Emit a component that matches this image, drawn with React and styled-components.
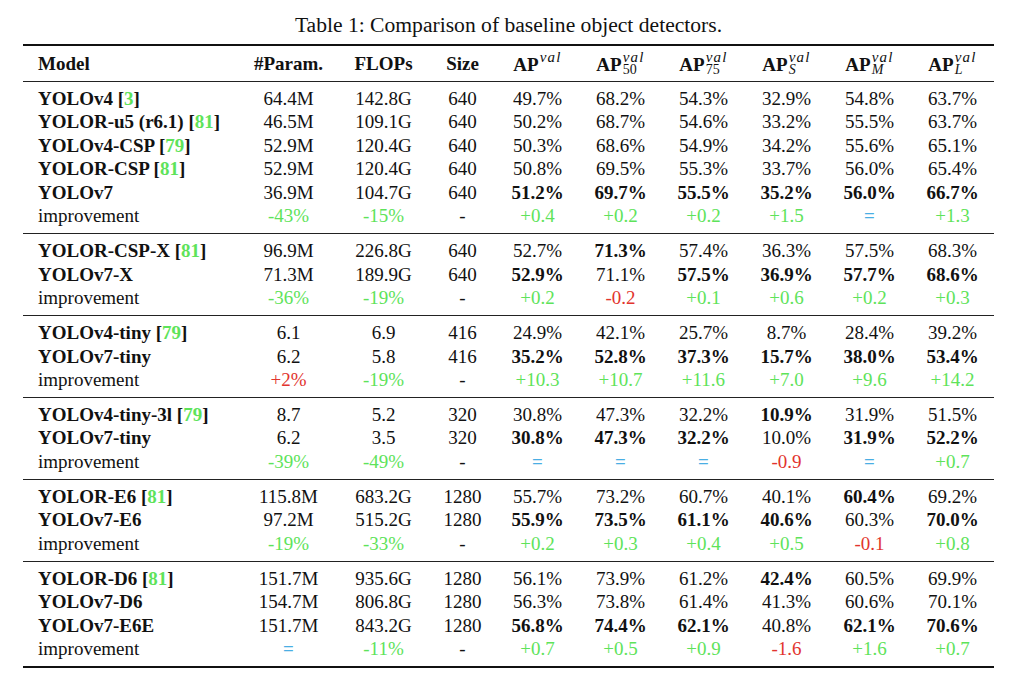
import React from "react";
import styled, { createGlobalStyle } from "styled-components";

const GlobalStyle = createGlobalStyle`
  body {
    margin: 0;
    background: #ffffff;
    font-family: "Liberation Serif", "Times New Roman", serif;
    color: #111111;
  }
`;

const Page = styled.div`
  width: 1024px;
  height: 692px;
  padding: 13px 0 0 23px;
  box-sizing: border-box;
`;

const Caption = styled.div`
  width: 971px;
  text-align: center;
  font-size: 21.6px;
  line-height: 24px;
  margin-bottom: 7px;
`;

const Table = styled.div`
  width: 971px;
  border-top: 2px solid #111;
  border-bottom: 2px solid #111;
`;

const COLS = "216px 99px 91px 67px repeat(6, 83px)";

const HeaderRow = styled.div`
  display: grid;
  grid-template-columns: ${COLS};
  height: 36px;
  padding-top: 1px;
  box-sizing: border-box;
  align-items: center;
  border-bottom: 1.5px solid #222;
  font-size: 19px;
`;

const Section = styled.div`
  padding: 5px 0 5.8px;
  border-top: ${(p) => (p.$first ? "none" : "1px solid #222")};
`;

const Row = styled.div`
  display: grid;
  grid-template-columns: ${COLS};
  height: 23.4px;
  align-items: center;
  font-size: 19px;
  line-height: 23.4px;
`;

const Cell = styled.div`
  text-align: ${(p) => (p.$left ? "left" : "center")};
  padding-left: ${(p) => (p.$left ? "15px" : "0")};
  font-weight: ${(p) => (p.$bold ? "bold" : "normal")};
  color: ${(p) => p.$color || "#111"};
  white-space: nowrap;
`;

const Ref = styled.span`
  color: #5ee35a;
`;

const Ap = styled.span`
  display: inline-flex;
  align-items: center;
  justify-content: center;
  line-height: 19px;
`;

const Scripts = styled.span`
  display: inline-flex;
  flex-direction: column;
  font-weight: normal;
  margin-left: 1px;
  text-align: left;
  height: 26px;
`;

const Sup = styled.span`
  font-style: italic;
  font-size: 15px;
  line-height: 12px;
  height: 12px;
  letter-spacing: 1.2px;
`;

const Sub = styled.span`
  font-style: ${(p) => (p.$italic ? "italic" : "normal")};
  font-size: 14px;
  line-height: 14px;
  height: 14px;
`;

const GREEN = "#5ee35a";
const RED = "#e2342e";
const BLUE = "#4aaee4";

function ApHead({ sub, italic }) {
  return (
    <Ap>
      AP
      <Scripts>
        <Sup>val</Sup>
        <Sub $italic={italic}>{sub || "\u00a0"}</Sub>
      </Scripts>
    </Ap>
  );
}

const sections = [
  [
    ["YOLOv4", "3", "64.4M", "142.8G", "640", "49.7%", "68.2%", "54.3%", "32.9%", "54.8%", "63.7%"],
    ["YOLOR-u5 (r6.1)", "81", "46.5M", "109.1G", "640", "50.2%", "68.7%", "54.6%", "33.2%", "55.5%", "63.7%"],
    ["YOLOv4-CSP", "79", "52.9M", "120.4G", "640", "50.3%", "68.6%", "54.9%", "34.2%", "55.6%", "65.1%"],
    ["YOLOR-CSP", "81", "52.9M", "120.4G", "640", "50.8%", "69.5%", "55.3%", "33.7%", "56.0%", "65.4%"],
    ["YOLOv7", "", "36.9M", "104.7G", "640", "*51.2%", "*69.7%", "*55.5%", "*35.2%", "*56.0%", "*66.7%"],
    ["improvement", null, "-43%", "-15%", "-", "+0.4", "+0.2", "+0.2", "+1.5", "=", "+1.3"],
  ],
  [
    ["YOLOR-CSP-X", "81", "96.9M", "226.8G", "640", "52.7%", "*71.3%", "57.4%", "36.3%", "57.5%", "68.3%"],
    ["YOLOv7-X", "", "71.3M", "189.9G", "640", "*52.9%", "71.1%", "*57.5%", "*36.9%", "*57.7%", "*68.6%"],
    ["improvement", null, "-36%", "-19%", "-", "+0.2", "-0.2", "+0.1", "+0.6", "+0.2", "+0.3"],
  ],
  [
    ["YOLOv4-tiny", "79", "6.1", "6.9", "416", "24.9%", "42.1%", "25.7%", "8.7%", "28.4%", "39.2%"],
    ["YOLOv7-tiny", "", "6.2", "5.8", "416", "*35.2%", "*52.8%", "*37.3%", "*15.7%", "*38.0%", "*53.4%"],
    ["improvement", null, "+2%", "-19%", "-", "+10.3", "+10.7", "+11.6", "+7.0", "+9.6", "+14.2"],
  ],
  [
    ["YOLOv4-tiny-3l", "79", "8.7", "5.2", "320", "30.8%", "47.3%", "32.2%", "*10.9%", "31.9%", "51.5%"],
    ["YOLOv7-tiny", "", "6.2", "3.5", "320", "*30.8%", "*47.3%", "*32.2%", "10.0%", "*31.9%", "*52.2%"],
    ["improvement", null, "-39%", "-49%", "-", "=", "=", "=", "-0.9", "=", "+0.7"],
  ],
  [
    ["YOLOR-E6", "81", "115.8M", "683.2G", "1280", "55.7%", "73.2%", "60.7%", "40.1%", "*60.4%", "69.2%"],
    ["YOLOv7-E6", "", "97.2M", "515.2G", "1280", "*55.9%", "*73.5%", "*61.1%", "*40.6%", "60.3%", "*70.0%"],
    ["improvement", null, "-19%", "-33%", "-", "+0.2", "+0.3", "+0.4", "+0.5", "-0.1", "+0.8"],
  ],
  [
    ["YOLOR-D6", "81", "151.7M", "935.6G", "1280", "56.1%", "73.9%", "61.2%", "*42.4%", "60.5%", "69.9%"],
    ["YOLOv7-D6", "", "154.7M", "806.8G", "1280", "56.3%", "73.8%", "61.4%", "41.3%", "60.6%", "70.1%"],
    ["YOLOv7-E6E", "", "151.7M", "843.2G", "1280", "*56.8%", "*74.4%", "*62.1%", "40.8%", "*62.1%", "*70.6%"],
    ["improvement", null, "=", "-11%", "-", "+0.7", "+0.5", "+0.9", "-1.6", "+1.6", "+0.7"],
  ],
];

// colour of an improvement value: lower params/flops is good, higher AP is good
function deltaColor(value, col) {
  if (value === "=") return BLUE;
  if (value === "-") return undefined;
  const up = value.startsWith("+");
  if (col < 2) return up ? RED : GREEN;
  return up ? GREEN : RED;
}

function DataRow({ row }) {
  const [name, ref, ...values] = row;
  const isDelta = ref === null;
  return (
    <Row>
      <Cell $left $bold={!isDelta}>
        {name}
        {ref ? (
          <>
            {" ["}
            <Ref>{ref}</Ref>]
          </>
        ) : null}
      </Cell>
      {values.map((v, i) => {
        const bold = v.startsWith("*");
        const text = bold ? v.slice(1) : v;
        return (
          <Cell
            key={i}
            $bold={bold || (isDelta && text === "=")}
            $color={isDelta ? deltaColor(text, i) : undefined}
          >
            {text}
          </Cell>
        );
      })}
    </Row>
  );
}

export default function App() {
  return (
    <Page>
      <GlobalStyle />
      <Caption>Table 1: Comparison of baseline object detectors.</Caption>
      <Table>
        <HeaderRow>
          <Cell $left $bold>Model</Cell>
          <Cell $bold>#Param.</Cell>
          <Cell $bold>FLOPs</Cell>
          <Cell $bold>Size</Cell>
          <Cell $bold><ApHead /></Cell>
          <Cell $bold><ApHead sub="50" /></Cell>
          <Cell $bold><ApHead sub="75" /></Cell>
          <Cell $bold><ApHead sub="S" italic /></Cell>
          <Cell $bold><ApHead sub="M" italic /></Cell>
          <Cell $bold><ApHead sub="L" italic /></Cell>
        </HeaderRow>
        {sections.map((rows, s) => (
          <Section key={s} $first={s === 0}>
            {rows.map((r, i) => (
              <DataRow key={i} row={r} />
            ))}
          </Section>
        ))}
      </Table>
    </Page>
  );
}
